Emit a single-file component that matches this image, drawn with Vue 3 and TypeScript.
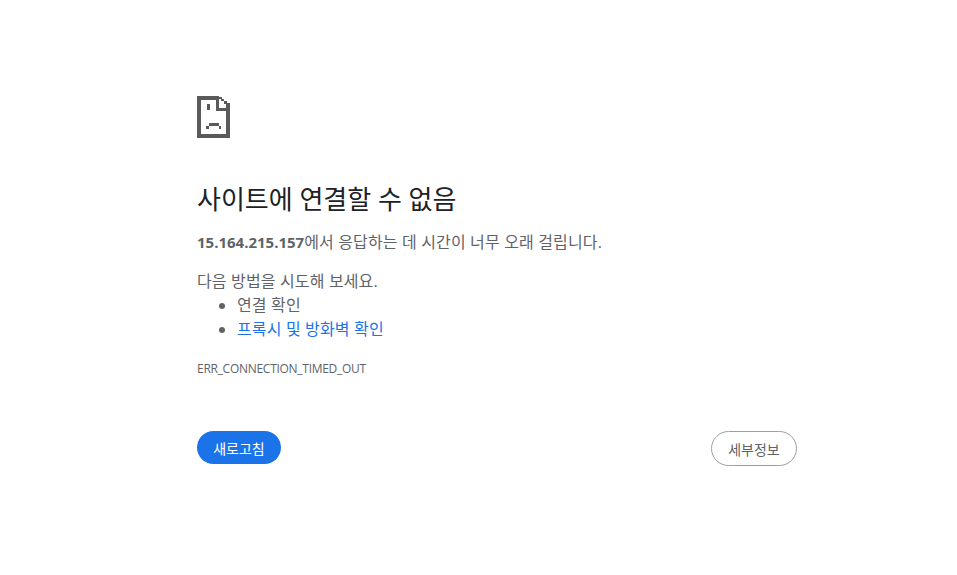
<script setup lang="ts">
const suggestions = [
  { text: '연결 확인', link: false },
  { text: '프록시 및 방화벽 확인', link: true },
]

// pixel blocks of the sad page icon: x, y, w, h
const iconRects = [
  [0, 0, 22, 4],
  [0, 0, 4, 42],
  [0, 38, 33, 4],
  [29, 7, 4, 35],
  [22, 1, 3, 2],
  [24, 3, 3, 2],
  [27, 5, 3, 3],
  [19, 0, 3, 15],
  [19, 12, 14, 3],
  [10, 8, 3, 6],
  [12, 27, 10, 3],
  [9, 30, 3, 3],
  [22, 30, 2, 3],
]
</script>

<template>
  <main class="page">
    <div class="wrapper">
      <svg class="icon" width="33" height="42" viewBox="0 0 33 42" shape-rendering="crispEdges">
        <rect
          v-for="(r, i) in iconRects"
          :key="i"
          :x="r[0]"
          :y="r[1]"
          :width="r[2]"
          :height="r[3]"
          fill="#5a5a5a"
        />
      </svg>

      <h1 class="title">사이트에 연결할 수 없음</h1>
      <p class="summary"><strong>15.164.215.157</strong>에서 응답하는 데 시간이 너무 오래 걸립니다.</p>

      <div class="suggestions">
        <p>다음 방법을 시도해 보세요.</p>
        <ul>
          <li v-for="item in suggestions" :key="item.text">
            <a v-if="item.link" href="#">{{ item.text }}</a>
            <template v-else>{{ item.text }}</template>
          </li>
        </ul>
      </div>

      <div class="code">ERR_CONNECTION_TIMED_OUT</div>

      <div class="buttons">
        <button class="reload" type="button">새로고침</button>
        <button class="details" type="button">세부정보</button>
      </div>
    </div>
  </main>
</template>

<style scoped>
.page {
  display: flex;
  padding: 96px 0 0 197px;
  font-family: "Open Sans", "Noto Sans CJK KR", sans-serif;
  color: #5f6368;
  font-size: 16px;
  line-height: 24px;
  letter-spacing: 0.15px;
}

.wrapper {
  width: 600px;
  display: flex;
  flex-direction: column;
}

.icon {
  display: block;
}

.title {
  margin: 45px 0 0;
  font-size: 26px;
  line-height: 32px;
  font-weight: 400;
  letter-spacing: 0;
  color: #202124;
}

.summary {
  margin: 15px 0 0;
}

.summary strong {
  font-size: 15px;
  font-weight: 700;
  letter-spacing: 0;
}

.suggestions {
  margin-top: 15px;
}

.suggestions p {
  margin: 0;
}

.suggestions ul {
  margin: 0;
  padding-left: 40px;
}

.suggestions a {
  color: #1a73e8;
  text-decoration: none;
}

.code {
  margin-top: 19px;
  font-size: 12px;
  line-height: 18px;
  letter-spacing: -0.28px;
}

.buttons {
  margin-top: 53px;
  display: flex;
  justify-content: space-between;
  align-items: flex-start;
}

.buttons button {
  font-family: inherit;
  font-size: 14px;
  border-radius: 20px;
  padding: 0;
}

.reload {
  width: 84px;
  height: 33px;
  background: #1a73e8;
  border: none;
  color: #fff;
}

.details {
  width: 86px;
  height: 35px;
  background: #fff;
  border: 1px solid #9aa0a6;
  color: #5f6368;
}
</style>
